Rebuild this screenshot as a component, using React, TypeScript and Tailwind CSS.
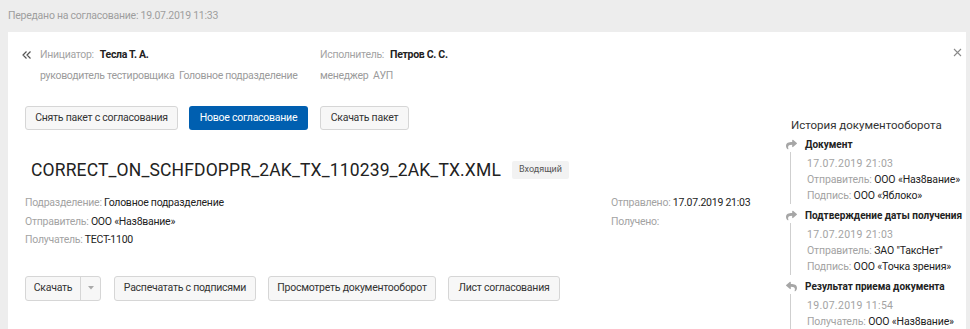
import { FaShare, FaReply } from 'react-icons/fa'

type HistoryItem = {
  title: string
  icon: 'forward' | 'back'
  date: string
  lines: { label: string; value: string }[]
}

const history: HistoryItem[] = [
  {
    title: 'Документ',
    icon: 'forward',
    date: '17.07.2019 21:03',
    lines: [
      { label: 'Отправитель', value: 'ООО «Наз8вание»' },
      { label: 'Подпись', value: 'ООО «Яблоко»' },
    ],
  },
  {
    title: 'Подтверждение даты получения',
    icon: 'forward',
    date: '17.07.2019 21:03',
    lines: [
      { label: 'Отправитель', value: 'ЗАО "ТаксНет"' },
      { label: 'Подпись', value: 'ООО «Точка зрения»' },
    ],
  },
  {
    title: 'Результат приема документа',
    icon: 'back',
    date: '19.07.2019 11:54',
    lines: [{ label: 'Получатель', value: 'ООО «Наз8вание»' }],
  },
]

function Field({ label, value }: { label: string; value?: string }) {
  return (
    <div className="h-[18.5px] leading-[18.5px] whitespace-nowrap">
      <span className="text-[#a3a3a3]">{label}:</span>
      {value && <span className="text-[#222]"> {value}</span>}
    </div>
  )
}

const btn =
  'h-[24px] flex items-center justify-center whitespace-nowrap border border-[#d6d6d6] rounded-[3px] bg-[#f7f7f7] text-[10.5px] tracking-[-0.25px] text-[#333]'

export default function App() {
  return (
    <div className="w-[970px] h-[329px] bg-[#ededed] overflow-hidden flex flex-col font-['Roboto',sans-serif]">
      {/* Top strip */}
      <div className="h-[32px] shrink-0 pl-2 flex items-center text-[10.5px] tracking-[-0.25px] text-[#9e9e9e] whitespace-nowrap">
        Передано на согласование: 19.07.2019 11:33
      </div>

      {/* Panel */}
      <div className="relative flex-1 ml-2 mr-1 bg-white flex">
        <svg
          className="absolute right-[4px] top-[16px]"
          width="9"
          height="9"
          viewBox="0 0 9 9"
        >
          <path d="M1 1L8 8M8 1L1 8" stroke="#8a8a8a" strokeWidth="1.1" />
        </svg>

        {/* Main column */}
        <div className="flex-1 pl-[17px] pt-[13px]">
          <div className="flex text-[10.5px] tracking-[-0.3px] whitespace-nowrap">
            <div className="w-[295px] flex">
              <div className="w-[18px] shrink-0 h-[20px] flex items-center -ml-[3px]">
                <svg width="9" height="8" viewBox="0 0 9 8">
                  <path
                    d="M4.5 0.5L1 4L4.5 7.5M8.5 0.5L5 4L8.5 7.5"
                    fill="none"
                    stroke="#555"
                    strokeWidth="1.2"
                  />
                </svg>
              </div>
              <div>
                <div className="h-[20px] leading-[20px]">
                  <span className="text-[#a3a3a3]">Инициатор:</span>
                  <span className="font-bold text-[#222] ml-[6px]">Тесла Т. А.</span>
                </div>
                <div className="mt-[1px] h-[20px] leading-[20px] text-[#9b9b9b]">
                  руководитель тестировщика&nbsp;&nbsp;Головное подразделение
                </div>
              </div>
            </div>
            <div>
              <div className="h-[20px] leading-[20px]">
                <span className="text-[#a3a3a3]">Исполнитель:</span>
                <span className="font-bold text-[#222] ml-[6px]">Петров С. С.</span>
              </div>
              <div className="mt-[1px] h-[20px] leading-[20px] text-[#9b9b9b]">
                менеджер&nbsp;&nbsp;АУП
              </div>
            </div>
          </div>

          <div className="mt-[20px] flex gap-[11px]">
            <button className={`${btn} w-[153px]`}>Снять пакет с согласования</button>
            <button className="h-[24px] w-[119px] rounded-[3px] bg-[#005fb0] text-white text-[10.5px] tracking-[-0.25px] flex items-center justify-center whitespace-nowrap">
              Новое согласование
            </button>
            <button className={`${btn} w-[89px] ml-px`}>Скачать пакет</button>
          </div>

          <div className="mt-[28px] h-[24px] flex items-center pl-[6px] whitespace-nowrap">
            <span className="text-[17.5px] text-[#222] tracking-[0.15px]">
              CORRECT_ON_SCHFDOPPR_2AK_TX_110239_2AK_TX.XML
            </span>
            <span className="ml-[11px] h-[18px] px-[7px] flex items-center rounded-[2px] bg-[#f2f2f2] text-[9px] text-[#555]">
              Входящий
            </span>
          </div>

          <div className="mt-[12px] flex text-[10.5px] tracking-[-0.25px]">
            <div className="w-[586px]">
              <Field label="Подразделение" value="Головное подразделение" />
              <Field label="Отправитель" value="ООО «Наз8вание»" />
              <Field label="Получатель" value="ТЕСТ-1100" />
            </div>
            <div>
              <Field label="Отправлено" value="17.07.2019 21:03" />
              <Field label="Получено" />
            </div>
          </div>

          <div className="mt-[26px] flex gap-[12px]">
            <div className="h-[25px] w-[76px] flex border border-[#d6d6d6] rounded-[3px] bg-[#f7f7f7] text-[10.5px] tracking-[-0.25px] text-[#333] mr-px">
              <div className="w-[55px] flex items-center justify-center border-r border-[#d6d6d6]">
                Скачать
              </div>
              <div className="flex-1 flex items-center justify-center">
                <svg width="6" height="4" viewBox="0 0 6 4">
                  <path d="M0 0H6L3 3.5Z" fill="#aaa" />
                </svg>
              </div>
            </div>
            <button className={`${btn} h-[25px] w-[142px]`}>Распечатать с подписями</button>
            <button className={`${btn} h-[25px] w-[168px]`}>Просмотреть документооборот</button>
            <button className={`${btn} h-[25px] w-[112px]`}>Лист согласования</button>
          </div>
        </div>

        {/* History sidebar */}
        <div className="w-[179px] shrink-0 pt-[84px] whitespace-nowrap">
          <div className="h-[18px] leading-[18px] pl-[4px] text-[11.5px] text-[#333]">
            История документооборота
          </div>
          <div className="mt-[2px]">
            {history.map((item) => (
              <div key={item.title} className="pb-[3px]">
                <div className="h-[16px] flex items-center">
                  <div className="w-[18px] -ml-[5px] mr-[5px] flex justify-center text-[#a6a6a6]">
                    {item.icon === 'forward' ? <FaShare size={11} /> : <FaReply size={11} />}
                  </div>
                  <span className="text-[10px] font-bold text-[#222]">{item.title}</span>
                </div>
                <div className="ml-[3px] border-l border-[#cfcfcf] pl-[16px] pt-[4px] text-[10.5px] tracking-[-0.15px]">
                  <div className="h-[16px] leading-[16px] text-[#a3a3a3] tracking-[0.3px]">{item.date}</div>
                  {item.lines.map((l) => (
                    <div key={l.label} className="h-[16px] leading-[16px]">
                      <span className="text-[#a3a3a3]">{l.label}:</span>
                      <span className="text-[#222]"> {l.value}</span>
                    </div>
                  ))}
                </div>
              </div>
            ))}
          </div>
        </div>
      </div>
    </div>
  )
}
